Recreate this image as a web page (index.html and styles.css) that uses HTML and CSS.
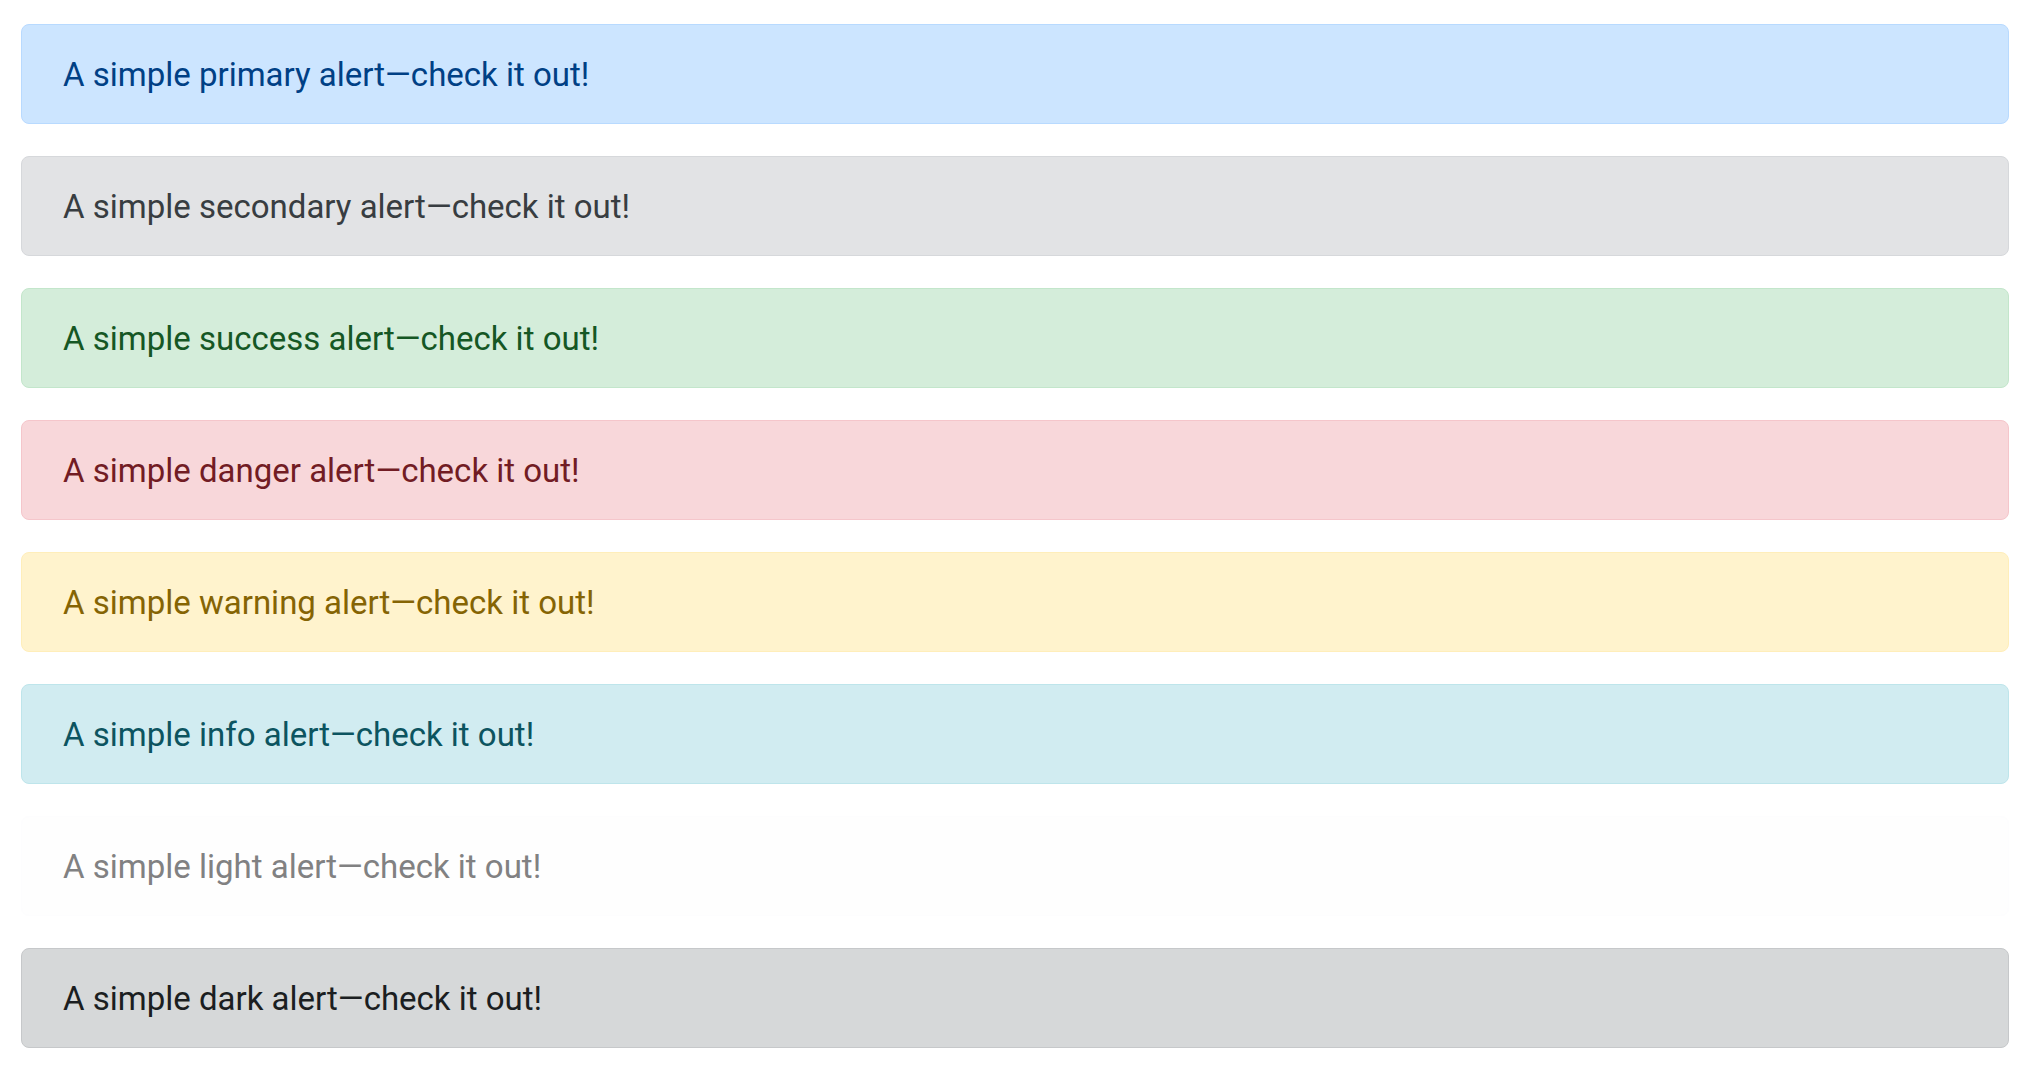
FILE: index.html
```html
<!DOCTYPE html>
<html lang="en">
<head>
<meta charset="utf-8">
<title>Alerts</title>
<link rel="stylesheet" href="styles.css">
</head>
<body>
<main class="alerts">
  <div class="alert alert-primary" role="alert">A simple primary alert—check it out!</div>
  <div class="alert alert-secondary" role="alert">A simple secondary alert—check it out!</div>
  <div class="alert alert-success" role="alert">A simple success alert—check it out!</div>
  <div class="alert alert-danger" role="alert">A simple danger alert—check it out!</div>
  <div class="alert alert-warning" role="alert">A simple warning alert—check it out!</div>
  <div class="alert alert-info" role="alert">A simple info alert—check it out!</div>
  <div class="alert alert-light" role="alert">A simple light alert—check it out!</div>
  <div class="alert alert-dark" role="alert">A simple dark alert—check it out!</div>
</main>
</body>
</html>
```
FILE: styles.css
```css
html, body {
  margin: 0;
  padding: 0;
  background: #ffffff;
}

body {
  font-family: Roboto, "Liberation Sans", Arial, sans-serif;
  font-size: 33px;
  line-height: 50px;
}

.alerts {
  display: flex;
  flex-direction: column;
  gap: 32px;
  padding: 24px 21px;
}

.alert {
  border: 1px solid transparent;
  border-radius: 8px;
  padding: 25px 41px 23px;
}

.alert-primary { color: #004085; background: #cce5ff; border-color: #b8daff; }
.alert-secondary { color: #383d41; background: #e2e3e5; border-color: #d6d8db; }
.alert-success { color: #155724; background: #d4edda; border-color: #c3e6cb; }
.alert-danger { color: #721c24; background: #f8d7da; border-color: #f5c6cb; }
.alert-warning { color: #856404; background: #fff3cd; border-color: #ffeeba; }
.alert-info { color: #0c5460; background: #d1ecf1; border-color: #bee5eb; }
.alert-light { color: #818182; background: #fefefe; border-color: #fdfdfe; }
.alert-dark { color: #1b1e21; background: #d6d8d9; border-color: #c6c8ca; }
```
